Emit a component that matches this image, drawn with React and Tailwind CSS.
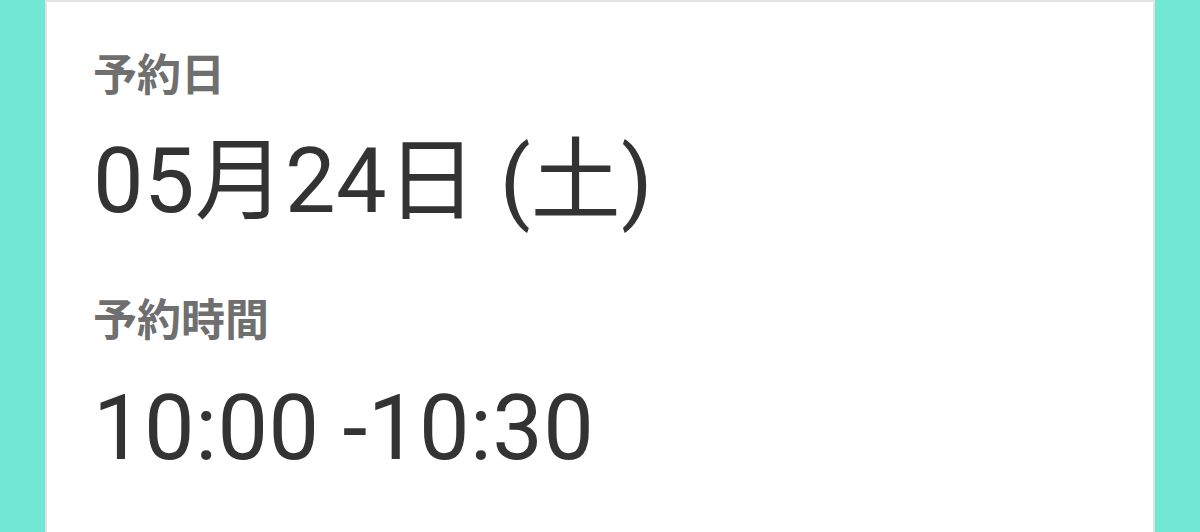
export default function App() {
  const font = { fontFamily: "Roboto, 'Noto Sans CJK JP', sans-serif" };
  return (
    <div className="w-[1200px] h-[532px] bg-[#72e8d4] flex px-[45px] overflow-hidden" style={font}>
      <div className="flex-1 bg-white border-x-2 border-t-2 border-[#e3e3e3] pl-[46px] pt-[52px] flex flex-col">
        <div className="text-[44px] leading-none font-bold text-[#6f6f6f]">予約日</div>
        <div className="mt-[39px] text-[90px] leading-none tracking-[0.3px] text-[#333333]">05月24日 (土)</div>
        <div className="mt-[72px] text-[44px] leading-none font-bold text-[#6f6f6f]">予約時間</div>
        <div className="mt-[41px] text-[90px] leading-none tracking-[0.5px] text-[#333333]">10:00 -10:30</div>
      </div>
    </div>
  );
}
